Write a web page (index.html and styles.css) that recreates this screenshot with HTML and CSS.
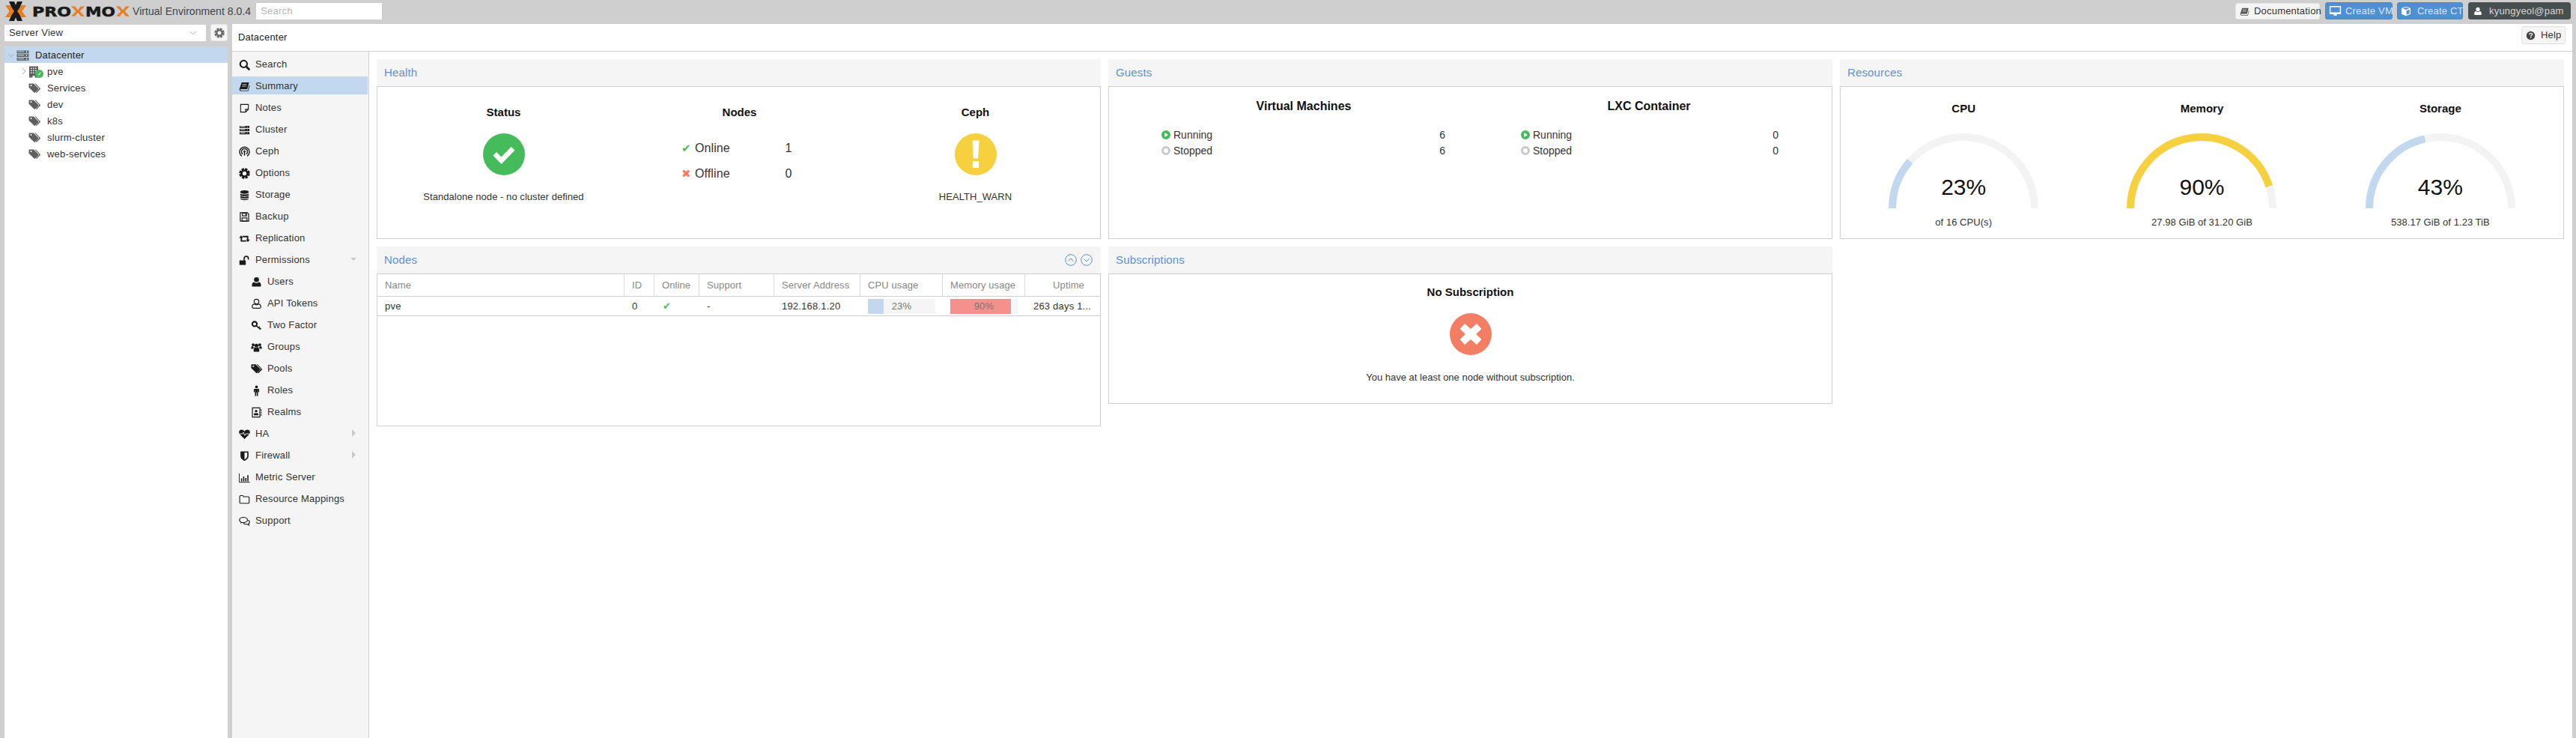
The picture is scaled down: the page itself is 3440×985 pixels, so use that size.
FILE: index.html
```html
<!DOCTYPE html>
<html lang="en">
<head>
<meta charset="utf-8">
<title>Proxmox Virtual Environment</title>
<link rel="stylesheet" href="styles.css">
</head>
<body>
<svg class="sprite" aria-hidden="true">
  <symbol id="i-search" viewBox="0 0 16 16"><circle cx="6.8" cy="6.8" r="4.9" fill="none" stroke="currentColor" stroke-width="2.2"/><path d="M10.4 10.4l4 4" stroke="currentColor" stroke-width="2.8" stroke-linecap="round"/></symbol>
  <symbol id="i-book" viewBox="0 0 16 16"><path d="M4 2h10.5l-2.6 9.6H2.8c-.6 0-1 .5-.8 1s.5.9 1.1.9h9.6l2-7.3.8.7-2.2 7.6H3C1.400 14.500.400 13 .8 11.400z" fill="currentColor"/><path d="M5 5h6M4.400 7.500h6" stroke="#fff" stroke-width=".8"/></symbol>
  <symbol id="i-note" viewBox="0 0 16 16"><path d="M2.500 2.500h11v7l-4 4h-7zM13.500 9.500h-4v4" fill="none" stroke="currentColor" stroke-width="1.200"/></symbol>
  <symbol id="i-server" viewBox="0 0 16 16"><path d="M1 2h14v3H1zM1 6.500h14v3H1zM1 11h14v3H1z" fill="currentColor"/><path d="M2 3h7M2 7.500h7M2 12h7M11.500 3.500h1M11.500 8h1M11.500 12.500h1" stroke="#fff" stroke-width="1"/></symbol>
  <symbol id="i-ceph" viewBox="0 0 16 16"><g fill="none" stroke="currentColor" stroke-width="1.500"><path d="M4.200 14.200a7 7 0 1 1 7.600 0"/><path d="M5.500 11.500a4.300 4.300 0 1 1 5 0"/></g><circle cx="8" cy="7.500" r="1.500" fill="currentColor"/><path d="M8 8v5.500" stroke="currentColor" stroke-width="1.600"/></symbol>
  <symbol id="i-gear" viewBox="0 0 16 16"><circle cx="8" cy="8" r="6" fill="none" stroke="currentColor" stroke-width="3.400" stroke-dasharray="3.300 1.412"/><circle cx="8" cy="8" r="4.200" fill="none" stroke="currentColor" stroke-width="2.700"/></symbol>
  <symbol id="i-db" viewBox="0 0 16 16"><ellipse cx="8" cy="3.500" rx="6" ry="2.500" fill="currentColor"/><path d="M2 5.500c1 2 11 2 12 0v2.200c-1 2.200-11 2.200-12 0zM2 8.900c1 2 11 2 12 0v2.100c-1 2.200-11 2.200-12 0zM2 12.200c1 2 11 2 12 0v.8c-1 2.800-11 2.800-12 0z" fill="currentColor"/></symbol>
  <symbol id="i-floppy" viewBox="0 0 16 16"><path d="M2 2h10l2 2v10H2z" fill="none" stroke="currentColor" stroke-width="1.300"/><path d="M5 2.500h6v4H5zM4.500 9.500h7v4.500h-7z" fill="none" stroke="currentColor" stroke-width="1.200"/><path d="M8.800 3.500h1.200v2H8.800z" fill="currentColor"/></symbol>
  <symbol id="i-retweet" viewBox="0 0 16 16"><path d="M3.200 3.500L6.200 7H4.500v3.300h5.100l1.700 2H3.200c-.4 0-.7-.3-.7-.7V7H.2zM12.800 12.800L9.800 9.300h1.700V6H6.400l-1.700-2h8.100c.4 0 .7.300.7.700v4.600h2.300z" fill="currentColor"/></symbol>
  <symbol id="i-unlock" viewBox="0 0 16 16"><path d="M.800 8h9v6.500h-9z" fill="currentColor"/><path d="M7.500 8V5.200a3 3 0 0 1 6 0V7" fill="none" stroke="currentColor" stroke-width="1.800"/></symbol>
  <symbol id="i-user" viewBox="0 0 16 16"><circle cx="8" cy="4.600" r="3.500" fill="currentColor"/><path d="M2.800 14.500c-.8 0-1.300-.6-1.300-1.400 0-2.700.8-5.100 3.200-5.100 1 .9 2.100 1.300 3.300 1.300s2.300-.4 3.300-1.300c2.400 0 3.200 2.400 3.200 5.100 0 .8-.5 1.400-1.300 1.400z" fill="currentColor"/></symbol>
  <symbol id="i-user-o" viewBox="0 0 16 16"><circle cx="8" cy="4.800" r="3.400" fill="none" stroke="currentColor" stroke-width="1.200"/><path d="M4.600 8.300c-1.900.5-2.800 2.200-2.800 4.200 0 1 .6 1.700 1.600 1.700h9.200c1 0 1.600-.7 1.600-1.700 0-2-.9-3.700-2.800-4.200-1 .8-2.100 1.100-3.400 1.100s-2.400-.3-3.400-1.100z" fill="none" stroke="currentColor" stroke-width="1.200"/></symbol>
  <symbol id="i-key" viewBox="0 0 16 16"><circle cx="5.300" cy="5.800" r="3.300" fill="none" stroke="currentColor" stroke-width="2.200"/><path d="M7.800 8.300l6 5.200M11 11.300l1.800-1.600M13 13.200l1.400-1.300" stroke="currentColor" stroke-width="1.700"/></symbol>
  <symbol id="i-users" viewBox="0 0 16 16"><g fill="currentColor"><circle cx="3.300" cy="4.500" r="2"/><circle cx="12.700" cy="4.500" r="2"/><circle cx="8" cy="5.500" r="2.700"/><path d="M.200 10c0-2 .8-3.500 2-3.500.7.500 1.400.7 2.100.6-.4.800-.6 1.800-.6 3H1.100c-.5 0-.9-.1-.9-.1zM15.800 10c0-2-.8-3.500-2-3.500-.7.500-1.400.7-2.100.6.400.8.600 1.800.6 3h2.600c.5 0 .9-.1.900-.1zM3.900 13c0-3 .8-5 2.200-5 .5.500 1.200.8 1.900.8s1.400-.3 1.900-.8c1.400 0 2.200 2 2.200 5 0 .8-.5 1.400-1.300 1.400H5.200c-.8 0-1.300-.6-1.300-1.400z"/></g></symbol>
  <symbol id="i-tags" viewBox="0 0 16 16"><path d="M.500 2.300c0-.5.400-.9.900-.9h4.900c.3 0 .6.100.8.300l6.100 6.100c.4.400.4 1 0 1.400l-4.300 4.300c-.4.400-1 .4-1.400 0L1.300 7.400a1.500 1.500 0 0 1-.8-1zM3.500 3a1.100 1.100 0 1 0 0 2.200 1.100 1.100 0 0 0 0-2.200z" fill="currentColor" fill-rule="evenodd"/><path d="M8.300 1.400h.8c.3 0 .6.100.8.300l5.700 6.100c.4.400.4 1 0 1.400l-4.300 4.300c-.4.400-1 .4-1.300 0l-.3-.3 4.200-4.300c.4-.4.400-1 0-1.400z" fill="currentColor"/></symbol>
  <symbol id="i-male" viewBox="0 0 16 16"><circle cx="8" cy="2.500" r="2" fill="currentColor"/><path d="M5.200 5.200h5.600c.6 0 1 .4 1 1v4h-1.300V7.400h-.4V15.500H8.400v-5h-.8v5H5.900V7.400h-.4v2.800H4.200v-4c0-.6.400-1 1-1z" fill="currentColor"/></symbol>
  <symbol id="i-addr" viewBox="0 0 16 16"><path d="M2.200 1.500h10.600v13H2.200z" fill="none" stroke="currentColor" stroke-width="1.300"/><path d="M14 3.500h1.300v2H14zM14 7h1.300v2H14zM14 10.500h1.300v2H14z" fill="currentColor"/><circle cx="7.500" cy="6" r="1.800" fill="currentColor"/><path d="M4.200 12c0-2 .8-3.300 1.800-3.300.9.500 2.100.5 3 0 1 0 1.800 1.300 1.800 3.300z" fill="currentColor"/></symbol>
  <symbol id="i-heart" viewBox="0 0 16 16"><path d="M8 14.800L1.900 8.700C.500 7.300.200 6.200.200 5.200.200 3 1.800 1.700 4 1.700c1.500 0 3 1 4 2.300 1-1.300 2.500-2.300 4-2.300 2.200 0 3.800 1.300 3.800 3.500 0 1-.3 2.100-1.700 3.500z" fill="currentColor"/><path d="M.8 7.500h4.300l1.300-2.300 2 4.600 1.500-2.300h5.300" fill="none" stroke="#f5f5f5" stroke-width="1"/></symbol>
  <symbol id="i-shield" viewBox="0 0 16 16"><path d="M3 1.500h10c.4 0 .7.300.7.700v6c0 3.500-3.500 5.900-5.700 6.800-2.200-.9-5.700-3.300-5.700-6.800v-6c0-.4.300-.7.700-.7zM8 3.200v9.800c1.500-.8 3.900-2.500 3.900-4.800v-5z" fill="currentColor" fill-rule="evenodd"/></symbol>
  <symbol id="i-chart" viewBox="0 0 16 16"><path d="M.500 2v12.500h15" fill="none" stroke="currentColor" stroke-width="1"/><path d="M3 9h1.700v4.300H3zM6 6.500h1.700v6.800H6zM9 8.500h1.700v4.800H9zM12 4.500h1.700v8.800H12z" fill="currentColor"/></symbol>
  <symbol id="i-folder" viewBox="0 0 16 16"><path d="M1.200 3.800c0-.7.500-1.200 1.200-1.200h3c.7 0 1.200.5 1.200 1.200v.4h6.800c.7 0 1.200.5 1.200 1.200v7c0 .7-.5 1.200-1.200 1.200H2.400c-.7 0-1.200-.5-1.200-1.200z" fill="none" stroke="currentColor" stroke-width="1.200"/></symbol>
  <symbol id="i-comments" viewBox="0 0 16 16"><ellipse cx="6.500" cy="6.500" rx="5.700" ry="3.800" fill="none" stroke="currentColor" stroke-width="1.200"/><path d="M3 9.300L2 11.600l2.800-1.400" fill="currentColor"/><path d="M13.200 6.800c1.600.7 2.300 1.800 2 3-.1.800-.7 1.500-1.500 2l.8 2-2.800-1.300c-2.200.3-4.200-.3-5.300-1.500" fill="none" stroke="currentColor" stroke-width="1.200"/></symbol>
  <symbol id="i-question" viewBox="0 0 16 16"><circle cx="8" cy="8" r="7" fill="currentColor"/><path d="M5.600 6.200c.2-1.300 1.200-2 2.500-2 1.400 0 2.400.8 2.400 2 0 1.700-2.300 1.700-2.300 3.200" fill="none" stroke="#f5f5f5" stroke-width="1.700"/><path d="M7.300 10.500h1.800v1.800H7.300z" fill="#f5f5f5"/></symbol>
  <symbol id="i-desktop" viewBox="0 0 16 16"><path d="M.800 2.800c0-.6.400-1 1-1h12.400c.6 0 1 .4 1 1v8.400c0 .6-.4 1-1 1H9.800l.4 1.600H5.800l.4-1.600H1.800c-.6 0-1-.4-1-1zM2.200 3.200v6.600h11.600V3.200z" fill="currentColor" fill-rule="evenodd"/></symbol>
  <symbol id="i-cube" viewBox="0 0 16 16"><path d="M8 .8l6.800 2.700v8.800L8 15.200 1.200 12.300V3.500zM3.400 3.800L8 5.600l4.600-1.800L8 2zM8.700 13.300l4.700-2V5.300L8.700 7.100z" fill="currentColor" fill-rule="evenodd"/></symbol>
  <symbol id="i-building" viewBox="0 0 16 16"><path d="M1 .5h12v15H8.500v-2.500h-3v2.500H1z" fill="currentColor"/><path d="M3 2.500h1.500v1.500H3zM6 2.500h1.500v1.500H6zM9 2.500h1.500v1.500H9zM3 5.500h1.500V7H3zM6 5.500h1.500V7H6zM9 5.500h1.500V7H9zM3 8.500h1.500V10H3zM6 8.500h1.500V10H6zM9 8.500h1.500V10H9z" fill="#fff"/></symbol>
  <symbol id="i-tree-dc" viewBox="0 0 16 16"><path d="M0 1.500h16v3.800H0zM0 6.200h16V10H0zM0 11h16v3.800H0z" fill="currentColor"/><path d="M1.500 3h8M1.500 7.800h8M1.500 12.600h8" stroke="#c2d8ef" stroke-width="1"/><circle cx="13" cy="3.400" r=".8" fill="#fff"/><circle cx="13" cy="8.100" r=".8" fill="#fff"/><circle cx="13" cy="12.900" r=".8" fill="#fff"/></symbol>
  <symbol id="i-chev-down" viewBox="0 0 12 8"><path d="M1 1.500l5 5 5-5" fill="none" stroke="currentColor" stroke-width="1"/></symbol>
  <symbol id="i-chev-right" viewBox="0 0 8 12"><path d="M1.500 1l5 5-5 5" fill="none" stroke="currentColor" stroke-width="1"/></symbol>
</svg>

<header class="topbar">
  <div class="logo">
    <svg class="logo-mark" viewBox="0 0 168 26" aria-label="Proxmox">
      <path d="M5 0h7l11 26h-7z" fill="#1a1a1a"/><path d="M23 0h-7L5 26h7z" fill="#1a1a1a"/>
      <path d="M0 5h6.500L12 13l-5.500 8H0l5.500-8zM28 5h-6.500L16 13l5.500 8H28l-5.500-8z" fill="#e57f25"/>
      <text class="logo-word" x="36" y="20" textLength="52" lengthAdjust="spacingAndGlyphs">PRO</text>
      <path d="M88 6.500h5l4 5 4-5h5l-6.500 6.500 6.500 6.700h-5l-4-5-4 5h-5l6.500-6.700z" fill="#e57f25"/>
      <text class="logo-word" x="107" y="20" textLength="40" lengthAdjust="spacingAndGlyphs">MO</text>
      <path d="M148 6.500h5l4 5 4-5h5l-6.500 6.500 6.500 6.700h-5l-4-5-4 5h-5l6.500-6.700z" fill="#e57f25"/>
    </svg>
    <span class="version">Virtual Environment 8.0.4</span>
  </div>
  <div class="global-search">Search</div>
  <div class="top-actions">
    <button class="btn btn-light"><svg class="ico-13 ico-dim"><use href="#i-book"/></svg>Documentation</button>
    <button class="btn btn-blue btn-vm"><svg class="ico-16"><use href="#i-desktop"/></svg>Create VM</button>
    <button class="btn btn-blue btn-ct"><svg class="ico-14"><use href="#i-cube"/></svg>Create CT</button>
    <button class="btn btn-dark"><svg class="ico-12"><use href="#i-user"/></svg>kyungyeol@pam<svg class="chev"><use href="#i-chev-down"/></svg></button>
  </div>
</header>

<div class="workspace">
  <aside class="sidebar">
    <div class="view-row">
      <div class="view-select">Server View<svg class="chev chev-gray"><use href="#i-chev-down"/></svg></div>
      <button class="gear-btn"><svg class="ico-14"><use href="#i-gear"/></svg></button>
    </div>
    <div class="tree">
      <div class="tree-row tree-selected"><svg class="tree-arrow"><use href="#i-chev-down"/></svg><svg class="tree-dc"><use href="#i-tree-dc"/></svg><span class="tree-dc-label">Datacenter</span></div>
      <div class="tree-row tree-child"><svg class="tree-arrow-r"><use href="#i-chev-right"/></svg><span class="node-icon"><svg class="tree-icon"><use href="#i-building"/></svg><span class="node-badge">✓</span></span><span>pve</span></div>
      <div class="tree-row tree-tag"><svg class="tree-icon"><use href="#i-tags"/></svg><span>Services</span></div>
      <div class="tree-row tree-tag"><svg class="tree-icon"><use href="#i-tags"/></svg><span>dev</span></div>
      <div class="tree-row tree-tag"><svg class="tree-icon"><use href="#i-tags"/></svg><span>k8s</span></div>
      <div class="tree-row tree-tag"><svg class="tree-icon"><use href="#i-tags"/></svg><span>slurm-cluster</span></div>
      <div class="tree-row tree-tag"><svg class="tree-icon"><use href="#i-tags"/></svg><span>web-services</span></div>
    </div>
  </aside>

  <main class="main">
    <div class="main-head">
      <span>Datacenter</span>
      <button class="btn btn-help"><svg class="ico-13"><use href="#i-question"/></svg>Help</button>
    </div>
    <div class="main-body">
      <nav class="nav">
        <a class="nav-item"><svg class="nav-ico"><use href="#i-search"/></svg>Search</a>
        <a class="nav-item nav-active"><svg class="nav-ico"><use href="#i-book"/></svg>Summary</a>
        <a class="nav-item"><svg class="nav-ico"><use href="#i-note"/></svg>Notes</a>
        <a class="nav-item"><svg class="nav-ico"><use href="#i-server"/></svg>Cluster</a>
        <a class="nav-item"><svg class="nav-ico"><use href="#i-ceph"/></svg>Ceph</a>
        <a class="nav-item"><svg class="nav-ico"><use href="#i-gear"/></svg>Options</a>
        <a class="nav-item"><svg class="nav-ico"><use href="#i-db"/></svg>Storage</a>
        <a class="nav-item"><svg class="nav-ico"><use href="#i-floppy"/></svg>Backup</a>
        <a class="nav-item"><svg class="nav-ico"><use href="#i-retweet"/></svg>Replication</a>
        <a class="nav-item"><svg class="nav-ico"><use href="#i-unlock"/></svg>Permissions<i class="tri tri-down"></i></a>
        <a class="nav-item nav-sub"><svg class="nav-ico"><use href="#i-user"/></svg>Users</a>
        <a class="nav-item nav-sub"><svg class="nav-ico"><use href="#i-user-o"/></svg>API Tokens</a>
        <a class="nav-item nav-sub"><svg class="nav-ico"><use href="#i-key"/></svg>Two Factor</a>
        <a class="nav-item nav-sub"><svg class="nav-ico"><use href="#i-users"/></svg>Groups</a>
        <a class="nav-item nav-sub"><svg class="nav-ico"><use href="#i-tags"/></svg>Pools</a>
        <a class="nav-item nav-sub"><svg class="nav-ico"><use href="#i-male"/></svg>Roles</a>
        <a class="nav-item nav-sub"><svg class="nav-ico"><use href="#i-addr"/></svg>Realms</a>
        <a class="nav-item"><svg class="nav-ico"><use href="#i-heart"/></svg>HA<i class="tri tri-right"></i></a>
        <a class="nav-item"><svg class="nav-ico"><use href="#i-shield"/></svg>Firewall<i class="tri tri-right"></i></a>
        <a class="nav-item"><svg class="nav-ico"><use href="#i-chart"/></svg>Metric Server</a>
        <a class="nav-item"><svg class="nav-ico"><use href="#i-folder"/></svg>Resource Mappings</a>
        <a class="nav-item"><svg class="nav-ico"><use href="#i-comments"/></svg>Support</a>
      </nav>

      <section class="dashboard">
        <article class="panel panel-tall">
          <h2 class="panel-title">Health</h2>
          <div class="panel-body health">
            <div class="health-col">
              <h3 class="heading">Status</h3>
              <svg class="big-status" viewBox="0 0 56 56"><circle cx="28" cy="28" r="28" fill="#45bb5c"/><path d="M13.500 29.500l4.500-4.500 6.500 6.500L37.500 18l5 4.500-18 18.500z" fill="#fff"/></svg>
              <p class="caption">Standalone node - no cluster defined</p>
            </div>
            <div class="health-col">
              <h3 class="heading">Nodes</h3>
              <div class="node-stats">
                <div class="node-stat"><span class="stat-ico stat-ok">✔</span><span class="stat-label">Online</span><span class="stat-val">1</span></div>
                <div class="node-stat"><span class="stat-ico stat-bad">✖</span><span class="stat-label">Offline</span><span class="stat-val">0</span></div>
              </div>
            </div>
            <div class="health-col">
              <h3 class="heading">Ceph</h3>
              <svg class="big-status" viewBox="0 0 56 56"><circle cx="28" cy="28" r="28" fill="#f6d03e"/><path d="M23.500 9.500h9l-1.300 24h-6.400zM23.800 37h8.400v9h-8.400z" fill="#fff"/></svg>
              <p class="caption">HEALTH_WARN</p>
            </div>
          </div>
        </article>

        <article class="panel panel-tall">
          <h2 class="panel-title">Guests</h2>
          <div class="panel-body guests">
            <div class="guest-col guest-vm">
              <h3 class="heading">Virtual Machines</h3>
              <div class="guest-rows">
                <div class="guest-row"><svg class="guest-ico"><circle cx="6" cy="6" r="6" fill="#45bb5c"/><path d="M4.300 3l4.700 3-4.700 3z" fill="#fff"/></svg>Running<span class="guest-val">6</span></div>
                <div class="guest-row"><svg class="guest-ico"><circle cx="6" cy="6" r="4.500" fill="#fff" stroke="#c9c9c9" stroke-width="3"/></svg>Stopped<span class="guest-val">6</span></div>
              </div>
            </div>
            <div class="guest-col guest-ct">
              <h3 class="heading">LXC Container</h3>
              <div class="guest-rows">
                <div class="guest-row"><svg class="guest-ico"><circle cx="6" cy="6" r="6" fill="#45bb5c"/><path d="M4.300 3l4.700 3-4.700 3z" fill="#fff"/></svg>Running<span class="guest-val">0</span></div>
                <div class="guest-row"><svg class="guest-ico"><circle cx="6" cy="6" r="4.500" fill="#fff" stroke="#c9c9c9" stroke-width="3"/></svg>Stopped<span class="guest-val">0</span></div>
              </div>
            </div>
          </div>
        </article>

        <article class="panel panel-tall">
          <h2 class="panel-title">Resources</h2>
          <div class="panel-body resources">
            <div class="gauge-col">
              <h3 class="heading">CPU</h3>
              <div class="gauge"><svg viewBox="0 0 200 100"><path class="arc-bg" d="M5 100A95 95 0 0 1 195 100"/><path class="arc-blue" d="M5 100A95 95 0 0 1 28.700 37.200"/></svg><span class="gauge-pct">23%</span></div>
              <p class="caption gauge-cap">of 16 CPU(s)</p>
            </div>
            <div class="gauge-col">
              <h3 class="heading">Memory</h3>
              <div class="gauge"><svg viewBox="0 0 200 100"><path class="arc-bg" d="M5 100A95 95 0 0 1 195 100"/><path class="arc-yellow" d="M5 100A95 95 0 0 1 190.300 70.600"/></svg><span class="gauge-pct">90%</span></div>
              <p class="caption gauge-cap">27.98 GiB of 31.20 GiB</p>
            </div>
            <div class="gauge-col">
              <h3 class="heading">Storage</h3>
              <div class="gauge"><svg viewBox="0 0 200 100"><path class="arc-bg" d="M5 100A95 95 0 0 1 195 100"/><path class="arc-blue" d="M5 100A95 95 0 0 1 79.300 7.300"/></svg><span class="gauge-pct">43%</span></div>
              <p class="caption gauge-cap">538.17 GiB of 1.23 TiB</p>
            </div>
          </div>
        </article>

        <article class="panel panel-tall">
          <h2 class="panel-title panel-title-tools">Nodes
            <span class="tools">
              <svg class="tool" viewBox="0 0 16 16"><circle cx="8" cy="8" r="7.300"/><path d="M4.500 9.500L8 6l3.500 3.500"/></svg>
              <svg class="tool" viewBox="0 0 16 16"><circle cx="8" cy="8" r="7.300"/><path d="M4.500 6.500L8 10l3.500-3.500"/></svg>
            </span>
          </h2>
          <div class="panel-body nodes-body">
            <table class="grid">
              <colgroup><col class="c-name"><col class="c-id"><col class="c-online"><col class="c-support"><col class="c-addr"><col class="c-cpu"><col class="c-mem"><col class="c-up"></colgroup>
              <thead><tr><th>Name</th><th>ID</th><th>Online</th><th>Support</th><th>Server Address</th><th>CPU usage</th><th>Memory usage</th><th class="th-up">Uptime</th></tr></thead>
              <tbody><tr>
                <td>pve</td><td class="td-id">0</td><td class="td-on"><span class="stat-ok">✔</span></td><td>-</td><td>192.168.1.20</td>
                <td><div class="bar"><div class="bar-fill bar-cpu" style="width:23%"></div><span class="bar-text">23%</span></div></td>
                <td><div class="bar"><div class="bar-fill bar-mem" style="width:90%"></div><span class="bar-text">90%</span></div></td>
                <td class="td-up">263 days 1...</td>
              </tr></tbody>
            </table>
          </div>
        </article>

        <article class="panel panel-sub">
          <h2 class="panel-title">Subscriptions</h2>
          <div class="panel-body subs">
            <h3 class="heading">No Subscription</h3>
            <svg class="big-status" viewBox="0 0 56 56"><circle cx="28" cy="28" r="28" fill="#f47e63"/><path d="M20 14.500L28 21.500l8-7 6 6.500-7.500 7 7.500 7-6 6.500-8-7-8 7-6-6.500 7.500-7-7.500-7z" fill="#fff" stroke="#fff" stroke-linejoin="round" stroke-width="1"/></svg>
            <p class="caption">You have at least one node without subscription.</p>
          </div>
        </article>
      </section>
    </div>
  </main>
</div>
</body>
</html>
```

FILE: styles.css
```css
* { box-sizing: border-box; }
html, body { margin: 0; height: 985px; overflow: hidden; }
body {
  background: #cfcfcf;
  color: #222;
  font: 13px/16px "Liberation Sans", Arial, sans-serif;
  letter-spacing: .2px;
  display: flex;
  flex-direction: column;
}
svg { display: block; flex: none; }
.sprite { width: 0; height: 0; position: absolute; }
h2, h3, p { margin: 0; font-weight: normal; }
button { font: inherit; letter-spacing: inherit; }

/* top bar */
.topbar { height: 32px; flex: none; display: flex; align-items: flex-start; padding: 0 7px 0 7px; position: relative; }
.logo { display: flex; align-items: center; height: 30px; }
.logo-mark { width: 168px; height: 26px; }
.logo-word { font: 900 18px "DejaVu Sans", sans-serif; fill: #1a1a1a; letter-spacing: 0; stroke: #1a1a1a; stroke-width: .5px; }
.version { margin-left: 2px; font-size: 14px; color: #444; letter-spacing: .05px; white-space: nowrap; }
.global-search { margin: 4px 0 0 7px; width: 168px; height: 22px; background: #fff; color: #b5b5b5; padding: 3px 6px; }
.top-actions { margin-left: auto; display: flex; align-items: flex-start; }
.btn { display: flex; align-items: center; height: 23px; border-radius: 3px; border: 1px solid transparent; padding: 0; white-space: nowrap; }
.btn-light { width: 113px; margin-top: 4px; height: 22px; background: #f5f5f5; color: #333; border-color: #e4e4e4; padding-left: 5px; gap: 6px; }
.btn-blue { background: #4f8fd4; border-color: #4a85c4; color: #d9e7f5; margin-top: 3px; }
.btn-vm { width: 90px; margin-left: 7px; padding-left: 4px; gap: 5px; }
.btn-ct { width: 88px; margin-left: 6px; padding-left: 4px; gap: 8px; }
.btn-dark { width: 137px; margin: 3px 0 0 7px; background: #474f50; border-color: #474f50; color: #d5d5d5; padding-left: 6px; gap: 9px; }
.ico-12 { width: 12px; height: 12px; }
.ico-13 { width: 13px; height: 13px; }
.ico-14 { width: 14px; height: 14px; }
.ico-16 { width: 17px; height: 17px; }
.ico-dim { color: #555; }
.chev { width: 9px; height: 6px; margin-left: auto; margin-right: 6px; }
.btn-blue svg { color: #fff; }
.btn-dark .ico-12 { color: #fff; }

/* workspace */
.workspace { flex: 1; display: flex; min-height: 0; padding-right: 5px; }
.sidebar { width: 310px; flex: none; padding: 0 6px; display: flex; flex-direction: column; }
.view-row { display: flex; height: 30px; gap: 6px; }
.view-select { width: 269px; height: 22px; margin-top: 1px; background: #fff; color: #333; padding: 3px 6px; display: flex; align-items: center; }
.chev-gray { color: #999; margin-right: 7px; }
.gear-btn { width: 23px; height: 23px; padding: 0; border: 1px solid #e4e4e4; border-radius: 3px; background: #f5f5f5; color: #6b6b6b; display: flex; align-items: center; justify-content: center; }
.tree { flex: 1; background: #fff; color: #333; }
.tree-row { height: 22px; display: flex; align-items: center; padding-top: 2px; }
.tree-selected { background: #c2d8ef; color: #222; padding-left: 5px; }
.tree-arrow { width: 8px; height: 6px; color: #888; }
.tree-dc { width: 17px; height: 16px; margin-left: 3px; color: #5d6468; }
.tree-dc-label { margin-left: 8px; }
.tree-child { padding-left: 32px; position: relative; }
.tree-arrow-r { width: 6px; height: 10px; color: #888; position: absolute; left: 23px; top: 6px; }
.node-icon { position: relative; width: 25px; height: 16px; flex: none; }
.node-badge { position: absolute; left: 9px; top: 5px; width: 11px; height: 11px; border-radius: 50%; background: #45bb5c; color: #fff; font-size: 7px; line-height: 11px; text-align: center; letter-spacing: 0; }
.tree-icon { width: 16px; height: 16px; color: #5f5f5f; }
.tree-tag { padding-left: 32px; gap: 9px; }

/* main */
.main { flex: 1; background: #fff; display: flex; flex-direction: column; min-width: 0; }
.main-head { height: 37px; flex: none; border-bottom: 1px solid #cfcfcf; display: flex; align-items: center; padding: 0 9px 0 8px; justify-content: space-between; color: #222; }
.btn-help { width: 59px; height: 24px; margin-top: -6px; background: #f5f5f5; border-color: #e0e0e0; color: #333; padding-left: 5px; gap: 7px; }
.btn-help svg { color: #444; }
.main-body { flex: 1; display: flex; min-height: 0; }

.nav { width: 183px; flex: none; background: #f5f5f5; border-right: 1px solid #cfcfcf; padding: 4px 1px 0 0; display: flex; flex-direction: column; gap: 5px; }
.nav-item { height: 24px; display: flex; align-items: center; padding: 2px 0 0 9px; color: #333; position: relative; }
.nav-active { background: #c2d8ef; }
.nav-sub { padding-left: 25px; }
.nav-ico { width: 15px; height: 15px; margin-right: 7px; color: #1a1a1a; }
.tri { position: absolute; left: 158px; width: 0; height: 0; }
.tri-down { top: 10px; border-left: 4.500px solid transparent; border-right: 4.500px solid transparent; border-top: 4.500px solid #c9c9c9; }
.tri-right { top: 7px; left: 160px; border-top: 5px solid transparent; border-bottom: 5px solid transparent; border-left: 5px solid #c9c9c9; }

/* dashboard */
.dashboard { flex: 1; padding: 10px; display: grid; grid-template-columns: repeat(3, 967px); grid-auto-rows: min-content; column-gap: 10px; row-gap: 10px; align-items: start; }
.panel { display: flex; flex-direction: column; }
.panel-tall { height: 240px; }
.panel-sub { height: 210px; }
.panel-title { height: 36px; flex: none; background: #f5f5f5; color: #5d91d6; font-size: 15px; line-height: 36px; padding-left: 10px; letter-spacing: .15px; }
.panel-title-tools { display: flex; justify-content: space-between; padding-right: 11px; }
.tools { display: flex; gap: 5px; align-items: center; }
.tool { width: 16px; height: 16px; fill: none; stroke: #5d91d6; stroke-width: 1; }
.panel-body { flex: 1; border: 1px solid #cfcfcf; background: #fff; }
.heading { font-size: 15px; line-height: 20px; font-weight: bold; color: #111; letter-spacing: 0; text-align: center; }
.caption { line-height: 16px; color: #333; text-align: center; letter-spacing: .05px; }
.big-status { width: 56px; height: 56px; margin: 18px auto 0; }

.health { display: grid; grid-template-columns: repeat(3, 315px); padding: 24px 0 0 11px; align-items: start; }
.health-col .caption { margin-top: 21px; }
.node-stats { margin: 21px 0 0 80px; }
.node-stat { display: flex; align-items: center; height: 34px; font-size: 16px; letter-spacing: .1px; color: #333; }
.stat-ico { width: 18px; font-size: 15px; letter-spacing: 0; }
.stat-ok { color: #45bb5c; font-family: "DejaVu Sans", sans-serif; }
.stat-bad { color: #f47e63; font-family: "DejaVu Sans", sans-serif; }
.stat-label { width: 118px; }
.stat-val { width: 14px; text-align: center; }

.guests { display: flex; padding-top: 16px; }
.guest-col { flex: none; }
.guest-vm { width: 490px; padding-left: 29px; }
.guest-ct { width: 462px; }
.guest-col .heading { width: 462px; font-size: 16px; }
.guest-rows { margin-top: 17px; }
.guest-vm .guest-rows { width: 379px; margin-left: 41px; }
.guest-ct .guest-rows { width: 344px; margin-left: 60px; }
.guest-row { height: 21px; display: flex; align-items: center; font-size: 14px; color: #333; letter-spacing: 0; }
.guest-ico { width: 12px; height: 12px; margin-right: 4px; }
.guest-val { margin-left: auto; }

.resources { display: grid; grid-template-columns: repeat(3, 1fr); padding: 19px 5px 0; }
.gauge-col { text-align: center; }
.gauge { position: relative; width: 200px; height: 100px; margin: 23px auto 0; }
.gauge svg { width: 200px; height: 100px; }
.arc-bg, .arc-blue, .arc-yellow { fill: none; stroke-width: 10; }
.arc-bg { stroke: #f3f3f3; }
.arc-blue { stroke: #c2d8ef; }
.arc-yellow { stroke: #f6d03e; }
.gauge-pct { position: absolute; left: 0; right: 0; top: 54px; font-size: 30px; line-height: 36px; color: #111; letter-spacing: 0; text-align: center; }
.gauge-cap { margin-top: 11px; }

.nodes-body { padding: 0; }
.grid { width: 100%; border-collapse: separate; border-spacing: 0; table-layout: fixed; }
.c-name { width: 330px; }
.c-id { width: 40px; }
.c-online { width: 60px; }
.c-support { width: 100px; }
.c-addr { width: 115px; }
.c-cpu { width: 110px; }
.c-mem { width: 110px; }
.grid th { height: 30px; padding: 0 10px; font-weight: normal; text-align: left; color: #888; border-right: 1px solid #dcdcdc; border-bottom: 1px solid #cfcfcf; white-space: nowrap; overflow: hidden; letter-spacing: .1px; }
.grid th:last-child { border-right: 0; }
.grid .th-up { text-align: center; padding-left: 16px; padding-right: 0; }
.grid td { height: 26px; padding: 0 10px; color: #333; border-bottom: 1px solid #cfcfcf; white-space: nowrap; overflow: hidden; }
.td-on { padding-left: 11px !important; }
.td-on span { font-size: 13px; }
.td-id { padding-left: 10px !important; }
.bar { position: relative; height: 20px; background: #f5f5f5; width: 90px; }
.bar-fill { height: 20px; }
.bar-cpu { background: #c2d8ef; }
.bar-mem { background: #f5918c; }
.bar-text { position: absolute; left: 0; right: 0; top: 2px; text-align: center; color: #777; }
.grid .td-up { padding-left: 11px; padding-right: 0; }

.subs { padding-top: 14px; }
.subs .caption { margin-top: 22px; letter-spacing: 0; }
```
